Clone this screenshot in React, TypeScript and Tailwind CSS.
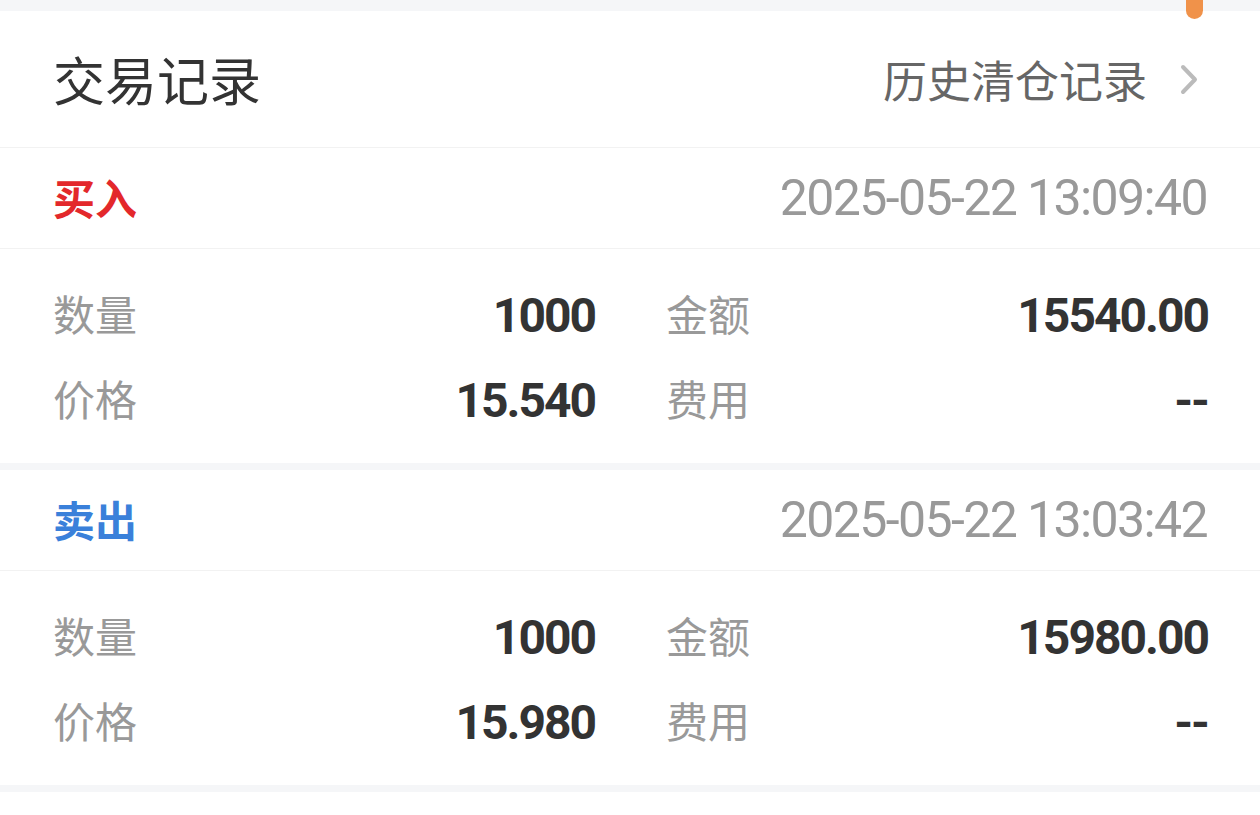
import React from "react";

type Trade = {
  side: "buy" | "sell";
  time: string;
  qty: string;
  amount: string;
  price: string;
  fee: string;
};

const trades: Trade[] = [
  { side: "buy", time: "2025-05-22 13:09:40", qty: "1000", amount: "15540.00", price: "15.540", fee: "--" },
  { side: "sell", time: "2025-05-22 13:03:42", qty: "1000", amount: "15980.00", price: "15.980", fee: "--" },
];

const cjk = "font-['Noto_Sans_CJK_SC',sans-serif]";
const num = "font-['Roboto','Noto_Sans_CJK_SC',sans-serif]";

function Cell({ label, value }: { label: string; value: string }) {
  return (
    <div className="flex items-center justify-between h-[85px]">
      <span className={`${cjk} text-[42px] text-[#999999] pb-[6px]`}>{label}</span>
      <span className={`${num} text-[48px] font-bold text-[#333333] tracking-[-2px]`}>{value}</span>
    </div>
  );
}

function TradeCard({ t }: { t: Trade }) {
  const buy = t.side === "buy";
  return (
    <div className="bg-white">
      <div className="flex items-center justify-between h-[101px] px-[53px] border-b border-[#f2f2f2]">
        <span className={`${cjk} text-[42px] font-bold pb-[4px] ${buy ? "text-[#e3282b]" : "text-[#3a80da]"}`}>
          {buy ? "买入" : "卖出"}
        </span>
        <span className={`${num} text-[50px] text-[#999999] tracking-[-1.6px]`}>{t.time}</span>
      </div>
      <div className="grid grid-cols-2 gap-x-[71px] pl-[53px] pr-[52px] pt-[24px] pb-[20px]">
        <Cell label="数量" value={t.qty} />
        <Cell label="金额" value={t.amount} />
        <Cell label="价格" value={t.price} />
        <Cell label="费用" value={t.fee} />
      </div>
    </div>
  );
}

export default function App() {
  return (
    <div className="relative w-[1260px] h-[815px] bg-white overflow-hidden">
      <div className="h-[11px] bg-[#f5f6f8]" />
      <div className="flex items-center justify-between h-[137px] pl-[53px] pr-[62px] border-b border-[#f2f2f2]">
        <span className={`${cjk} text-[52px] text-[#333333]`}>交易记录</span>
        <div className="flex items-center gap-[33px]">
          <span className={`${cjk} text-[44px] text-[#666666]`}>历史清仓记录</span>
          <svg width="18" height="31" viewBox="0 0 18 31" fill="none">
            <polyline points="3,3 15,15.5 3,28" stroke="#bbbbbb" strokeWidth="4" strokeLinecap="round" strokeLinejoin="round" />
          </svg>
        </div>
      </div>
      {trades.map((t, i) => (
        <React.Fragment key={i}>
          <TradeCard t={t} />
          <div className="h-[7px] bg-[#f5f6f8]" />
        </React.Fragment>
      ))}
      <div className="absolute left-[1186px] top-0 w-[17px] h-[19px] rounded-b-full bg-[#f0924a]" />
    </div>
  );
}
